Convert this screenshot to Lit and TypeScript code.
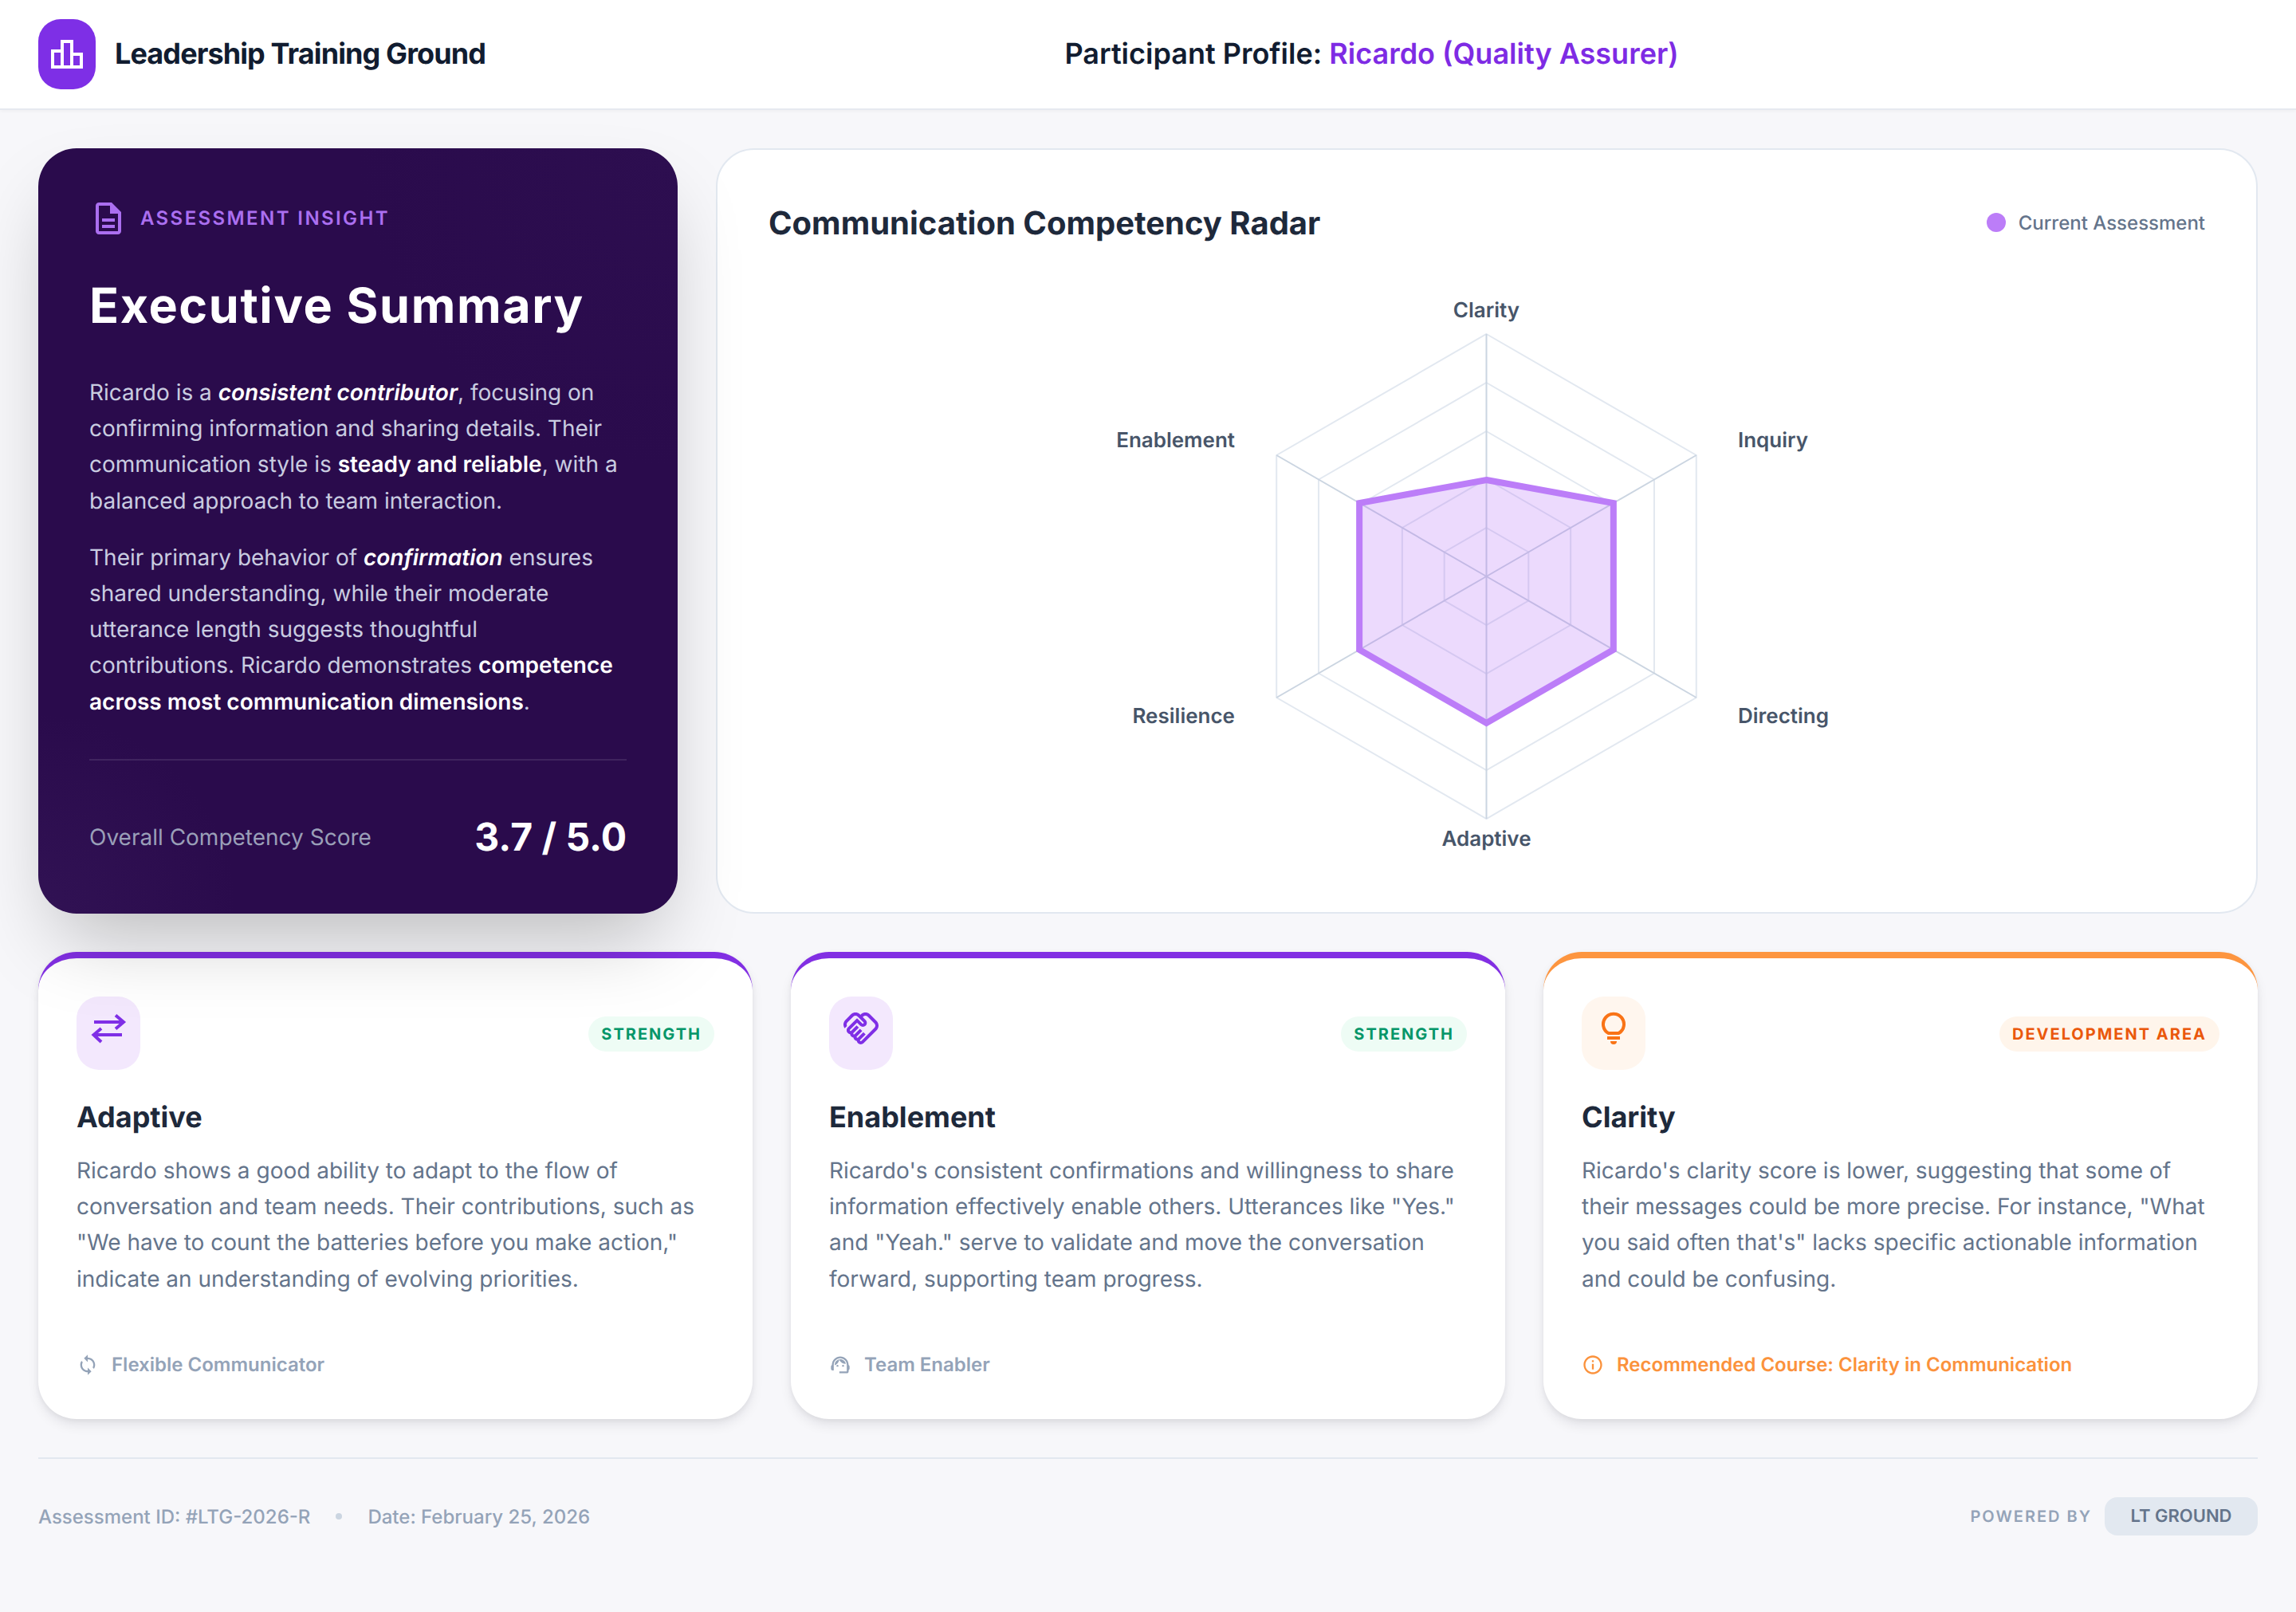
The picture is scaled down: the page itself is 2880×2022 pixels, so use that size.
import { LitElement, html, css, svg } from "lit";
import { customElement } from "lit/decorators.js";

const CX = 499.5, CY = 350, R = 304;
const pt = (i: number, r: number) => {
  const a = (Math.PI / 3) * i - Math.PI / 2;
  return [CX + r * Math.cos(a), CY + r * Math.sin(a)];
};
const poly = (vals: number[]) => vals.map((v, i) => pt(i, v).map((n) => n.toFixed(2)).join(",")).join(" ");

const leaderboard = svg`<path d="M16 11V3H8v6H2v12h20V11h-6zm-6-6h4v14h-4V5zm-6 6h4v8H4v-8zm16 8h-4v-6h4v6z"/>`;
const descr = svg`<path d="M8 16h8v2H8zm0-4h8v2H8zm6-10H6c-1.1 0-2 .9-2 2v16c0 1.1.89 2 1.99 2H18c1.1 0 2-.9 2-2V8l-6-6zm4 18H6V4h7v5h5v11z"/>`;
const handshake = svg`<path d="M12.22 19.85c-.18.18-.5.21-.71 0-.18-.18-.21-.5 0-.71l3.39-3.39-1.41-1.41-3.39 3.39c-.19.2-.51.19-.71 0-.21-.21-.18-.53 0-.71l3.39-3.39-1.41-1.41-3.39 3.39c-.18.18-.5.21-.71 0-.19-.19-.19-.51 0-.71l3.39-3.39-1.42-1.41-3.39 3.39c-.18.18-.5.21-.71 0-.19-.2-.19-.51 0-.71L9.52 8.4l1.87 1.86c.95.95 2.59.94 3.54 0 .98-.98.98-2.56 0-3.54l-1.86-1.86.28-.28c.78-.78 2.05-.78 2.83 0l4.24 4.24c.78.78.78 2.05 0 2.83l-8.2 8.2zm9.61-6.78c1.56-1.56 1.56-4.09 0-5.66l-4.24-4.24c-1.56-1.56-4.09-1.56-5.66 0l-.28.28-.28-.28c-1.56-1.56-4.09-1.56-5.66 0L2.17 6.71c-1.42 1.42-1.55 3.63-.4 5.19l1.45-1.45c-.39-.75-.26-1.7.37-2.33l3.54-3.54c.78-.78 2.05-.78 2.83 0l3.56 3.56c.18.18.21.5 0 .71-.21.21-.53.18-.71 0L9.52 5.57l-5.8 5.79c-.98.97-.98 2.56 0 3.54.39.39.89.63 1.42.7.07.52.3 1.02.7 1.42.4.4.9.63 1.42.7.07.52.3 1.02.7 1.42.4.4.9.63 1.42.7.07.54.31 1.03.7 1.42.47.47 1.1.73 1.77.73.67 0 1.3-.26 1.77-.73l8.21-8.19z"/>`;
const sync = svg`<path d="M12 4V1L8 5l4 4V6c3.31 0 6 2.69 6 6 0 1.01-.25 1.97-.7 2.8l1.46 1.46C19.54 15.03 20 13.57 20 12c0-4.42-3.58-8-8-8zm0 14c-3.31 0-6-2.69-6-6 0-1.01.25-1.97.7-2.8L5.24 7.74C4.46 8.97 4 10.43 4 12c0 4.42 3.58 8 8 8v3l4-4-4-4v3z"/>`;
const agent = svg`<path d="M21 12.22C21 6.73 16.74 3 12 3c-4.69 0-9 3.65-9 9.28-.6.34-1 .98-1 1.72v2c0 1.1.9 2 2 2h1v-6.1c0-3.87 3.13-7 7-7s7 3.13 7 7V19h-8v2h8c1.1 0 2-.9 2-2v-1.22c.59-.31 1-.92 1-1.62v-2.3c0-.7-.41-1.31-1-1.64z"/><circle cx="9" cy="13" r="1"/><circle cx="15" cy="13" r="1"/><path d="M18 11.03C17.52 8.18 15.04 6 12.05 6c-3.03 0-6.29 2.51-6.03 6.45 2.47-1.01 4.33-3.21 4.86-5.89 1.31 2.63 4 4.44 7.12 4.47z"/>`;
const info = svg`<path d="M11 7h2v2h-2zm0 4h2v6h-2zm1-9C6.48 2 2 6.48 2 12s4.48 10 10 10 10-4.48 10-10S17.52 2 12 2zm0 18c-4.41 0-8-3.59-8-8s3.59-8 8-8 8 3.59 8 8-3.59 8-8 8z"/>`;

@customElement("app-root")
export class AppRoot extends LitElement {
  static styles = css`
    :host {
      display: block;
      min-height: 100vh;
      background: #f7f7fa;
      font-family: Inter, "Liberation Sans", sans-serif;
      text-rendering: geometricPrecision;
      color: #0f172a;
    }
    * { box-sizing: border-box; }
    .top {
      height: 138px;
      background: #fff;
      border-bottom: 2px solid #e6e9f0;
      box-shadow: 0 2px 4px rgba(15, 23, 42, 0.03);
      padding: 0 48px;
      display: flex;
      align-items: center;
      justify-content: space-between;
    }
    .brand { display: flex; align-items: center; gap: 24px; }
    .logo {
      width: 72px;
      height: 88px;
      border-radius: 28px;
      background: #7e2fe6;
      display: flex;
      align-items: center;
      justify-content: center;
      color: #fff;
    }
    .logo svg { width: 48px; height: 48px; fill: currentColor; }
    .brand-name { font-size: 36px; font-weight: 700; letter-spacing: -0.9px; color: #111c30; padding-bottom: 3px; }
    .profile { font-size: 36px; font-weight: 600; color: #111c30; padding-bottom: 3px; }
    .profile span { color: #7e2be4; }
    .spacer { width: 0; }

    main { padding: 48px 48px 0; }
    .row1 { display: grid; grid-template-columns: 802px 1fr; gap: 48px; height: 960px; }
    .summary {
      position: relative;
      z-index: 2;
      border-radius: 48px;
      background:
        radial-gradient(circle at 0% 100%, #311254 0%, rgba(49, 18, 84, 0) 20%),
        radial-gradient(circle at 100% 0%, #2d0e50 0%, rgba(45, 14, 80, 0) 32%),
        #2a0b4c;
      box-shadow: 0 50px 100px -24px rgba(0, 0, 0, 0.25);
      padding: 64px;
      display: flex;
      flex-direction: column;
    }
    .eyebrow { display: flex; align-items: center; gap: 16px; color: #ab6ff0; height: 48px; }
    .eyebrow svg { width: 48px; height: 48px; fill: currentColor; }
    .eyebrow span { font-size: 24px; font-weight: 600; letter-spacing: 2.4px; padding-bottom: 1px; }
    h1 {
      margin: 45px 0 0;
      font-size: 61px;
      line-height: 80px;
      font-weight: 700;
      letter-spacing: 1.6px;
      color: #fff;
    }
    .summary p {
      margin: 0 0 26px;
      font-size: 28px;
      line-height: 45.2px;
      color: #c9cce0;
    }
    .paras { margin-top: 47px; }
    .summary strong { font-weight: 600; color: #fff; }
    .summary em { font-style: italic; font-weight: 600; color: #fff; }
    .score {
      margin-top: auto;
      border-top: 2px solid rgba(255, 255, 255, 0.1);
      padding-top: 64px;
      height: 130px;
      display: flex;
      align-items: center;
      justify-content: space-between;
    }
    .score-label { font-size: 28px; color: #9a9fb8; }
    .score-val { font-size: 48px; font-weight: 700; color: #fff; padding-bottom: 2px; }

    .radar {
      background: #fff;
      border: 2px solid #e2e8f0;
      border-radius: 48px;
      padding: 64px;
      display: flex;
      flex-direction: column;
    }
    .radar-head { display: flex; align-items: center; justify-content: space-between; height: 54px; }
    h2 { margin: 0; font-size: 40px; font-weight: 700; color: #1e293b; }
    .legend { display: flex; align-items: center; gap: 16px; font-size: 24px; font-weight: 500; color: #64748b; }
    .dot { width: 24px; height: 24px; border-radius: 50%; background: #bc7df8; }
    .chart { display: block; width: 1000px; height: 700px; margin: 67px auto 0; }
    .ring { fill: none; stroke: #e2e8f0; stroke-width: 2; }
    .spoke { stroke: #cbd5e1; stroke-width: 2; }
    .area { fill: rgba(168, 85, 247, 0.22); stroke: #bc7df8; stroke-width: 8; stroke-linejoin: miter; }
    .lbl { font-family: Inter, "Liberation Sans", sans-serif; font-size: 26px; font-weight: 600; fill: #475569; dominant-baseline: central; }

    .row2 { display: grid; grid-template-columns: repeat(3, 1fr); gap: 48px; margin-top: 48px; }
    .card {
      position: relative;
      height: 586px;
      background: #fff;
      border-radius: 48px;
      border-top: 8px solid #822fe3;
      padding: 48px;
      box-shadow: 0 8px 16px -2px rgba(15, 23, 42, 0.1), 0 2px 6px rgba(15, 23, 42, 0.05);
      display: flex;
      flex-direction: column;
    }
    .card.dev { border-top-color: #fd953f; }
    .card-top { display: flex; align-items: center; justify-content: space-between; }
    .icon {
      width: 80px;
      height: 92px;
      border-radius: 28px;
      background: #f3e8fd;
      color: #7f2fe6;
      display: flex;
      justify-content: center;
      padding-top: 16px;
    }
    .dev .icon { background: #fff6ee; color: #f97316; }
    .icon svg { width: 48px; height: 48px; fill: currentColor; }
    .icon svg.line { fill: none; stroke: currentColor; stroke-width: 4; }
    .badge {
      height: 44px;
      margin-top: 2px;
      border-radius: 22px;
      padding: 0 16px;
      display: flex;
      align-items: center;
      font-size: 20px;
      font-weight: 700;
      letter-spacing: 2px;
      background: #eefcf5;
      color: #059669;
    }
    .dev .badge { background: #fff5eb; color: #ea580c; }
    h3 { margin: 35px 0 0; font-size: 36px; line-height: 48px; font-weight: 700; color: #1e293b; }
    .desc { margin: 21px 0 0; font-size: 28px; line-height: 45.2px; color: #64748b; }
    .foot {
      margin-top: auto;
      display: flex;
      align-items: center;
      gap: 16px;
      font-size: 24px;
      font-weight: 600;
      color: #94a3b8;
      height: 40px;
    }
    .foot svg { width: 28px; height: 28px; fill: currentColor; flex: none; }
    .foot span { padding-bottom: 1px; }
    .dev .foot { color: #fb923c; }

    footer {
      margin: 48px 48px 0;
      border-top: 2px solid #e2e8f0;
      padding-top: 48px;
      display: flex;
      align-items: center;
      justify-content: space-between;
      font-size: 24px;
      font-weight: 500;
      color: #94a3b8;
    }
    .meta { display: flex; align-items: center; gap: 32px; }
    .sep { width: 8px; height: 8px; border-radius: 50%; background: #cbd5e1; }
    .powered { display: flex; align-items: center; gap: 16px; }
    .powered-label { font-size: 20px; font-weight: 600; letter-spacing: 2px; }
    .chip {
      width: 192px;
      height: 48px;
      border-radius: 16px;
      background: #e2e8f0;
      color: #64748b;
      font-size: 22px;
      font-weight: 600;
      display: flex;
      align-items: center;
      justify-content: center;
    }
  `;

  private card(kind: string, badge: string, icon: unknown, title: string, desc: string, foot: unknown, footText: string) {
    return html`<article class="card ${kind}">
      <div class="card-top">
        <div class="icon">${icon}</div>
        <div class="badge">${badge}</div>
      </div>
      <h3>${title}</h3>
      <p class="desc">${desc}</p>
      <div class="foot"><svg viewBox="0 0 24 24">${foot}</svg><span>${footText}</span></div>
    </article>`;
  }

  render() {
    const rings = [61, 122, 182, 243, 304];
    const data = [121, 184, 184, 184, 184, 184];
    return html`
      <header class="top">
        <div class="brand">
          <div class="logo"><svg viewBox="0 0 24 24">${leaderboard}</svg></div>
          <div class="brand-name">Leadership Training Ground</div>
        </div>
        <div class="profile">Participant Profile: <span>Ricardo (Quality Assurer)</span></div>
        <div class="spacer"></div>
      </header>
      <main>
        <div class="row1">
          <section class="summary">
            <div class="eyebrow"><svg viewBox="0 0 24 24">${descr}</svg><span>ASSESSMENT INSIGHT</span></div>
            <h1>Executive Summary</h1>
            <div class="paras">
              <p>Ricardo is a <em>consistent contributor</em>, focusing on confirming information and sharing details. Their communication style is <strong>steady and reliable</strong>, with a balanced approach to team interaction.</p>
              <p>Their primary behavior of <em>confirmation</em> ensures shared understanding, while their moderate utterance length suggests thoughtful contributions. Ricardo demonstrates <strong>competence across most communication dimensions</strong>.</p>
            </div>
            <div class="score">
              <span class="score-label">Overall Competency Score</span>
              <span class="score-val">3.7 / 5.0</span>
            </div>
          </section>
          <section class="radar">
            <div class="radar-head">
              <h2>Communication Competency Radar</h2>
              <div class="legend"><span class="dot"></span><span>Current Assessment</span></div>
            </div>
            <svg class="chart" viewBox="0 0 1000 700">
              ${rings.map((r) => svg`<polygon class="ring" points=${poly([r, r, r, r, r, r])}></polygon>`)}
              ${[0, 1, 2, 3, 4, 5].map((i) => { const [x, y] = pt(i, R); return svg`<line class="spoke" x1=${CX} y1=${CY} x2=${x} y2=${y}></line>`; })}
              <polygon class="area" points=${poly(data)}></polygon>
              <text class="lbl" x="499.500" y="16" text-anchor="middle">Clarity</text>
              <text class="lbl" x="815" y="179" text-anchor="start">Inquiry</text>
              <text class="lbl" x="815" y="525.500" text-anchor="start">Directing</text>
              <text class="lbl" x="499.500" y="679" text-anchor="middle">Adaptive</text>
              <text class="lbl" x="184" y="525.500" text-anchor="end">Resilience</text>
              <text class="lbl" x="184" y="179" text-anchor="end">Enablement</text>
            </svg>
          </section>
        </div>
        <div class="row2">
          ${this.card("", "STRENGTH",
            svg`<svg class="line" viewBox="0 0 48 48"><path d="M6 16H43M33 7.500 43 16 33 24.500M41 32H5.500M15 24 5.500 32 15 41"/></svg>`,
            "Adaptive",
            `Ricardo shows a good ability to adapt to the flow of conversation and team needs. Their contributions, such as "We have to count the batteries before you make action," indicate an understanding of evolving priorities.`,
            sync, "Flexible Communicator")}
          ${this.card("", "STRENGTH",
            svg`<svg viewBox="0 0 24 24">${handshake}</svg>`,
            "Enablement",
            `Ricardo's consistent confirmations and willingness to share information effectively enable others. Utterances like "Yes." and "Yeah." serve to validate and move the conversation forward, supporting team progress.`,
            agent, "Team Enabler")}
          ${this.card("dev", "DEVELOPMENT AREA",
            svg`<svg viewBox="0 0 48 48"><path class="bulb" fill="none" stroke="currentColor" stroke-width="4" d="M17.600 30A13 13 0 1 1 30.400 30Z"/><rect x="16" y="34" width="16" height="4"/><path d="M20 40h8a4 4 0 0 1-8 0z"/></svg>`,
            "Clarity",
            `Ricardo's clarity score is lower, suggesting that some of their messages could be more precise. For instance, "What you said often that's" lacks specific actionable information and could be confusing.`,
            info, "Recommended Course: Clarity in Communication")}
        </div>
      </main>
      <footer>
        <div class="meta">
          <span>Assessment ID: #LTG-2026-R</span>
          <span class="sep"></span>
          <span>Date: February 25, 2026</span>
        </div>
        <div class="powered">
          <span class="powered-label">POWERED BY</span>
          <span class="chip">LT GROUND</span>
        </div>
      </footer>
    `;
  }
}
